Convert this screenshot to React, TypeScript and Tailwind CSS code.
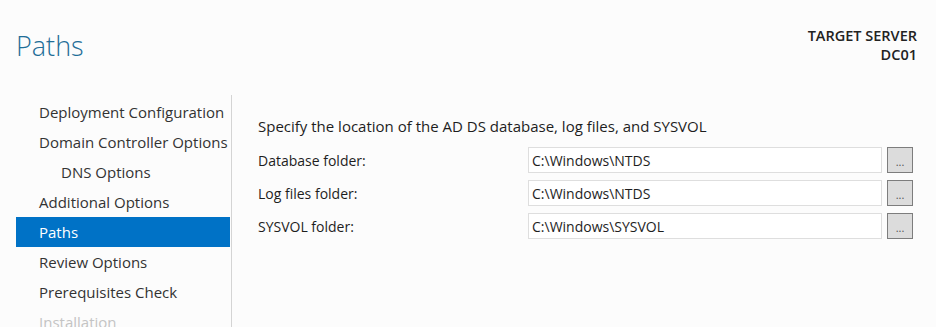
const navItems = [
  { label: "Deployment Configuration" },
  { label: "Domain Controller Options" },
  { label: "DNS Options", indent: true },
  { label: "Additional Options" },
  { label: "Paths", active: true },
  { label: "Review Options" },
  { label: "Prerequisites Check" },
  { label: "Installation", disabled: true },
];

const folders = [
  { label: "Database folder:", value: "C:\\Windows\\NTDS" },
  { label: "Log files folder:", value: "C:\\Windows\\NTDS" },
  { label: "SYSVOL folder:", value: "C:\\Windows\\SYSVOL" },
];

export default function App() {
  return (
    <div className="h-[327px] w-[936px] overflow-hidden bg-[#fcfcfc] font-['Open_Sans','Noto_Sans',sans-serif] text-[#1e1e1e]">
      <div className="flex h-[97px] items-start justify-between">
        <h1 className="pl-[16px] pt-[26px] text-[27px] font-light leading-[40px] text-[#1f6e98]">Paths</h1>
        <div className="pr-[19px] pt-[26px] text-right text-[14.5px] font-semibold leading-[19px] text-[#222]">
          <div>TARGET SERVER</div>
          <div>DC01</div>
        </div>
      </div>
      <div className="flex">
        <nav className="relative w-[232px] pl-[16px]">
          <div className="absolute right-0 top-[-2px] h-[240px] w-px bg-[#d4d4d4]" />
          {navItems.map((item) => (
            <div
              key={item.label}
              className={
                "flex h-[30px] w-[214px] items-center text-[15px] " +
                (item.active ? "bg-[#0072c6] text-white " : "") +
                (item.disabled ? "text-[#c4c4c4] " : !item.active ? "text-[#333] " : "") +
                (item.indent ? "pl-[45px]" : "pl-[23px]")
              }
            >
              {item.label}
            </div>
          ))}
        </nav>
        <section className="pl-[26px] pt-[18px] text-[14px]">
          <p className="text-[15px] leading-[22px]">Specify the location of the AD DS database, log files, and SYSVOL</p>
          <div className="mt-[10px] flex flex-col gap-[7px]">
            {folders.map((f) => (
              <div key={f.label} className="flex h-[26px] items-center">
                <div className="w-[270px]">{f.label}</div>
                <div className="flex h-[26px] w-[354px] items-center border border-[#dedede] bg-white pl-[3px]">
                  {f.value}
                </div>
                <div className="ml-[5px] flex h-[26px] w-[26px] items-end justify-center border border-[#7d7d7d] bg-[#dcdcdc] pb-[3px] text-[11px] leading-[14px] text-[#555]">
                  ...
                </div>
              </div>
            ))}
          </div>
        </section>
      </div>
    </div>
  );
}
